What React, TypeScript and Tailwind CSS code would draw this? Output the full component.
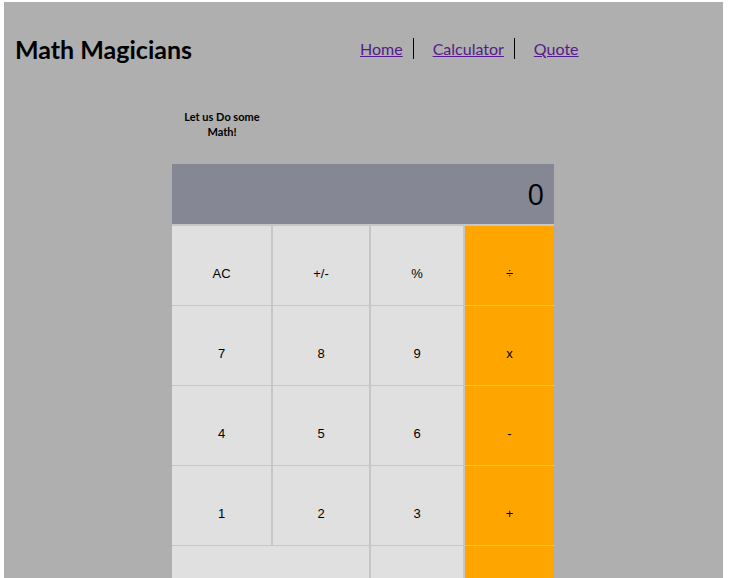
import React from "react";

const rows: { label: string; span?: boolean; op?: boolean }[][] = [
  [{ label: "AC" }, { label: "+/-" }, { label: "%" }, { label: "÷", op: true }],
  [{ label: "7" }, { label: "8" }, { label: "9" }, { label: "x", op: true }],
  [{ label: "4" }, { label: "5" }, { label: "6" }, { label: "-", op: true }],
  [{ label: "1" }, { label: "2" }, { label: "3" }, { label: "+", op: true }],
  [{ label: "0", span: true }, { label: "." }, { label: "=", op: true }],
];

export default function App() {
  return (
    <div className="h-[578px] bg-white pt-[2px] pl-[4px] overflow-hidden">
      <div className="w-[719px] h-[640px] bg-[#afafaf]" style={{ fontFamily: 'Lato, "Open Sans", sans-serif' }}>
        <header className="flex items-center h-[96px] pl-[11px]">
          <h1 className="text-[25px] font-bold text-black w-[326px]">Math Magicians</h1>
          <nav className="mb-[4px]">
            <ul className="flex items-center text-[16px]">
              <li className="pl-[19px] pr-[10px] border-r border-black leading-[21px]">
                <a href="#" className="underline text-[#551a8b]">Home</a>
              </li>
              <li className="pl-[19px] pr-[10px] border-r border-black leading-[21px]">
                <a href="#" className="underline text-[#551a8b]">Calculator</a>
              </li>
              <li className="pl-[19px] pr-[10px] leading-[21px]">
                <a href="#" className="underline text-[#551a8b]">Quote</a>
              </li>
            </ul>
          </nav>
        </header>
        <div className="ml-[168px]">
          <p className="w-[100px] text-center text-[11px] font-bold leading-[15px] text-black pt-[11px] h-[66px]">
            Let us Do some Math!
          </p>
          <div className="w-[382px]" style={{ fontFamily: '"Liberation Sans", Arial, sans-serif' }}>
            <div className="h-[60px] bg-[#858795] flex items-center justify-end pr-[10px] text-[29px] text-black" style={{ fontFamily: '"Open Sans", sans-serif' }}>
              0
            </div>
            <div className="bg-[#c6c6c6] pt-[2px] grid grid-cols-[99px_96px_92px_89px] gap-x-[2px] gap-y-[1px]">
              {rows.map((row, ri) =>
                row.map((b, bi) => (
                  <button
                    key={`${ri}-${bi}`}
                    className={`h-[79px] flex items-center justify-center pt-[16px] text-[13px] text-black ${
                      b.op ? "bg-[#ffa500]" : "bg-[#e0e0e0]"
                    } ${b.span ? "col-span-2" : ""}`}
                  >
                    {b.label}
                  </button>
                ))
              )}
            </div>
          </div>
        </div>
      </div>
    </div>
  );
}
